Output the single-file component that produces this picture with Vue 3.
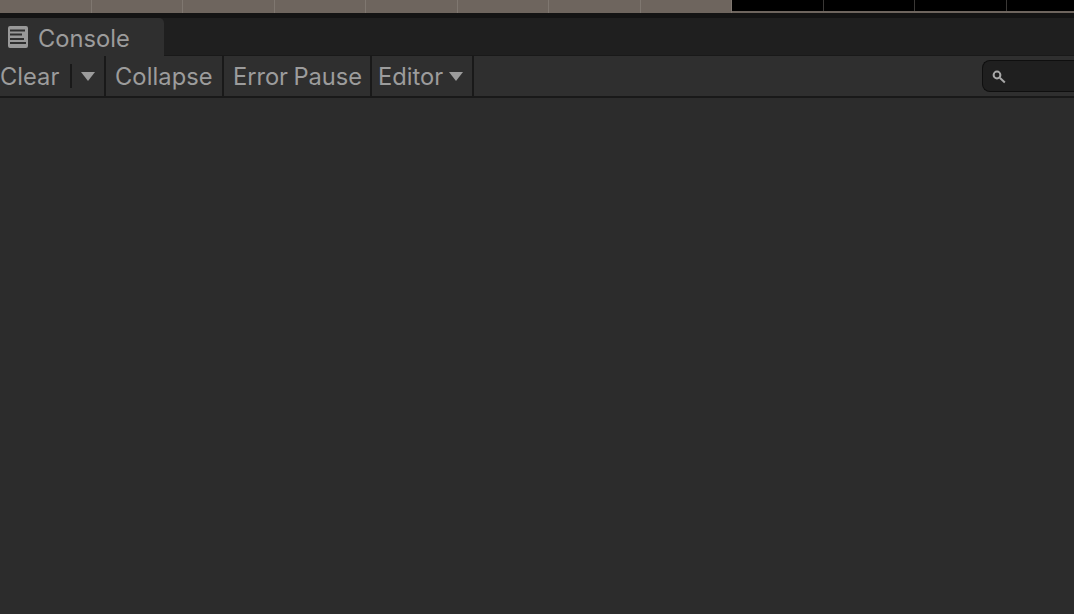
<script setup>
const ticks = [0, 1, 2, 3, 4, 5, 6, 7]
const darkTicks = [0, 1, 2, 3]
</script>

<template>
  <div class="console-window">
    <div class="timeline">
      <div class="timeline-bar">
        <span v-for="tick in ticks" :key="tick" class="tick"></span>
      </div>
      <div class="timeline-dark">
        <span v-for="tick in darkTicks" :key="tick" class="tick dark"></span>
      </div>
    </div>

    <div class="tab-strip">
      <div class="tab">
        <svg class="tab-icon" width="20" height="22" viewBox="0 0 20 22">
          <path fill-rule="evenodd" fill="#999" d="M2 0h16a2 2 0 0 1 2 2v18a2 2 0 0 1-2 2H2a2 2 0 0 1-2-2V2a2 2 0 0 1 2-2zM2 3.5v2h15v-2zM2 7.5v2h12v-2zM2 12v2h14v-2zM2 16v2h16v-2z" />
        </svg>
        <span class="tab-label">Console</span>
      </div>
    </div>

    <div class="toolbar">
      <div class="tool clear-tool">
        <span class="clear-label">Clear</span>
        <span class="clear-split"></span>
        <span class="arrow"></span>
      </div>
      <div class="tool collapse-tool">Collapse</div>
      <div class="tool pause-tool">Error Pause</div>
      <div class="tool editor-tool">
        <span>Editor</span>
        <span class="arrow"></span>
      </div>
      <div class="search">
        <svg width="14" height="14" viewBox="0 0 14 14">
          <circle cx="5" cy="5" r="3.4" fill="none" stroke="#a8a8a8" stroke-width="2" />
          <path d="M7.8 7.8l5 4.6" stroke="#a8a8a8" stroke-width="2" fill="none" />
        </svg>
      </div>
    </div>

    <div class="log-area"></div>
  </div>
</template>

<style>
html, body {
  background: #2c2c2c;
  margin: 0;
  overflow: hidden;
}
</style>

<style scoped>
.console-window {
  background: #2c2c2c;
  color: #9c9c9c;
  display: flex;
  flex-direction: column;
  font-family: Inter, "Liberation Sans", sans-serif;
  font-size: 23.7px;
  height: 614px;
  overflow: hidden;
  white-space: nowrap;
  width: 1074px;
}

.timeline {
  background: #6e655e;
  display: flex;
  flex: 0 0 13px;
  height: 13px;
}

.timeline-bar {
  display: flex;
  flex: 0 0 732px;
}

.timeline-dark {
  background: #000;
  border-bottom: 2px solid #6e655e;
  display: flex;
  flex: 1;
}

.tick {
  border-right: 1px solid #7f7770;
  box-sizing: border-box;
  flex: 0 0 91.5px;
  height: 100%;
}

.tick.dark {
  border-right-color: #3a3836;
}

.tab-strip {
  background: #1f1f1f;
  border-bottom: 1px solid #191919;
  border-top: 5px solid #141414;
  box-sizing: border-box;
  display: flex;
  flex: 0 0 43px;
}

.tab {
  align-items: center;
  background: #2f2f2f;
  border-radius: 0 5px 0 0;
  box-sizing: border-box;
  display: flex;
  gap: 10px;
  margin-bottom: -1px;
  padding-left: 8px;
  width: 164px;
}

.tab-label {
  margin-top: 2px;
}

.toolbar {
  align-items: stretch;
  background: #2f2f2f;
  border-bottom: 2px solid #191919;
  box-sizing: border-box;
  display: flex;
  flex: 0 0 42px;
}

.tool {
  align-items: center;
  border-right: 2px solid #191919;
  box-sizing: border-box;
  display: flex;
}

.clear-tool {
  width: 106px;
}

.clear-split {
  background: #191919;
  height: 24px;
  margin-left: 11px;
  width: 2px;
}

.clear-tool .arrow {
  margin-left: 9px;
}

.collapse-tool {
  letter-spacing: 0.07px;
  padding-left: 9px;
  width: 118px;
}

.pause-tool {
  letter-spacing: -0.05px;
  padding-left: 9px;
  width: 148px;
  word-spacing: -1px;
}

.editor-tool {
  gap: 6px;
  padding-left: 6px;
  width: 102px;
}

.arrow {
  border-left: 7.5px solid transparent;
  border-right: 7.5px solid transparent;
  border-top: 9px solid #9c9c9c;
  height: 0;
  width: 0;
}

.search {
  align-items: center;
  align-self: flex-start;
  background: #1f1f1f;
  border: 1px solid #0f0f0f;
  border-radius: 8px 0 0 8px;
  border-right: 0;
  box-sizing: border-box;
  display: flex;
  height: 32px;
  margin: 4px 0 0 auto;
  padding-left: 9px;
  padding-top: 2px;
  width: 92px;
}

.log-area {
  background: #2c2c2c;
  flex: 1;
}
</style>
